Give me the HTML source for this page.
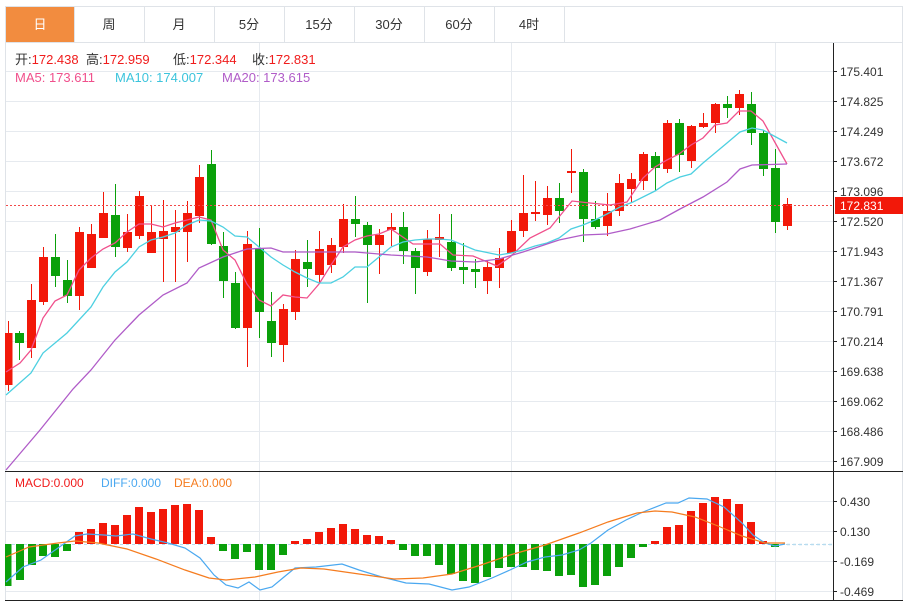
<!DOCTYPE html>
<html><head><meta charset="utf-8"><style>
html,body{margin:0;padding:0;background:#fff;width:909px;height:602px;overflow:hidden}
svg{display:block;font-family:"Liberation Sans","Noto Sans CJK SC",sans-serif}
</style></head><body>
<svg width="909" height="602" viewBox="0 0 909 602" xmlns="http://www.w3.org/2000/svg">
<rect x="5.5" y="6.5" width="897" height="36" fill="#fff" stroke="#dfe3e8"/>
<rect x="6" y="7" width="68" height="35" fill="#f28c3f"/>
<g stroke="#dfe3e8"><line x1="74.5" y1="6" x2="74.5" y2="42"/><line x1="144.5" y1="6" x2="144.5" y2="42"/><line x1="214.5" y1="6" x2="214.5" y2="42"/><line x1="284.5" y1="6" x2="284.5" y2="42"/><line x1="354.5" y1="6" x2="354.5" y2="42"/><line x1="424.5" y1="6" x2="424.5" y2="42"/><line x1="494.5" y1="6" x2="494.5" y2="42"/><line x1="564.5" y1="6" x2="564.5" y2="42"/></g>
<g font-size="13" text-anchor="middle" fill="#333"><text x="40" y="29" fill="#fff">日</text><text x="109" y="29">周</text><text x="179" y="29">月</text><text x="249" y="29">5分</text><text x="319" y="29">15分</text><text x="389" y="29">30分</text><text x="459" y="29">60分</text><text x="529" y="29">4时</text></g>
<line x1="5.5" y1="42" x2="5.5" y2="601" stroke="#dfe3e8"/>
<line x1="902.5" y1="42" x2="902.5" y2="601" stroke="#dfe3e8"/>
<g stroke="#e6eaef">
<line x1="6" y1="71.5" x2="833" y2="71.5"/><line x1="6" y1="101.5" x2="833" y2="101.5"/><line x1="6" y1="131.5" x2="833" y2="131.5"/><line x1="6" y1="161.5" x2="833" y2="161.5"/><line x1="6" y1="191.5" x2="833" y2="191.5"/><line x1="6" y1="221.5" x2="833" y2="221.5"/><line x1="6" y1="251.5" x2="833" y2="251.5"/><line x1="6" y1="281.5" x2="833" y2="281.5"/><line x1="6" y1="311.5" x2="833" y2="311.5"/><line x1="6" y1="341.5" x2="833" y2="341.5"/><line x1="6" y1="371.5" x2="833" y2="371.5"/><line x1="6" y1="401.5" x2="833" y2="401.5"/><line x1="6" y1="431.5" x2="833" y2="431.5"/><line x1="6" y1="461.5" x2="833" y2="461.5"/>
<line x1="6" y1="501.5" x2="833" y2="501.5"/><line x1="6" y1="531.5" x2="833" y2="531.5"/><line x1="6" y1="561.5" x2="833" y2="561.5"/><line x1="6" y1="591.5" x2="833" y2="591.5"/>
<line x1="259.5" y1="43" x2="259.5" y2="600"/><line x1="511.5" y1="43" x2="511.5" y2="600"/><line x1="775.5" y1="43" x2="775.5" y2="600"/>
</g>
<g font-size="13">
<text x="15" y="64" fill="#333">开:<tspan fill="#f01c1c">172.438</tspan></text>
<text x="86" y="64" fill="#333">高:<tspan fill="#f01c1c">172.959</tspan></text>
<text x="173" y="64" fill="#333">低:<tspan fill="#f01c1c">172.344</tspan></text>
<text x="252" y="64" fill="#333">收:<tspan fill="#f01c1c">172.831</tspan></text>
<text x="15" y="82" fill="#f0508c">MA5: 173.611</text><text x="115" y="82" fill="#3cc4dc">MA10: 174.007</text><text x="222" y="82" fill="#b05cc8">MA20: 173.615</text>
</g>
<g fill="#f21809" stroke="#f21809">
<line x1="8.5" y1="321" x2="8.5" y2="391"/><rect x="5" y="333" width="7.5" height="52" stroke="none"/>
<line x1="31.5" y1="284" x2="31.5" y2="358"/><rect x="27" y="300" width="9" height="48" stroke="none"/>
<line x1="43.5" y1="247" x2="43.5" y2="305"/><rect x="39" y="257" width="9" height="45" stroke="none"/>
<line x1="79.5" y1="227" x2="79.5" y2="310"/><rect x="75" y="232" width="9" height="64" stroke="none"/>
<line x1="91.5" y1="224" x2="91.5" y2="268"/><rect x="87" y="234" width="9" height="34" stroke="none"/>
<line x1="103.5" y1="192" x2="103.5" y2="238"/><rect x="99" y="213" width="9" height="25" stroke="none"/>
<line x1="127.5" y1="214" x2="127.5" y2="252"/><rect x="123" y="232" width="9" height="16" stroke="none"/>
<line x1="139.5" y1="191" x2="139.5" y2="239"/><rect x="135" y="196" width="9" height="40" stroke="none"/>
<line x1="151.5" y1="206" x2="151.5" y2="253"/><rect x="147" y="232" width="9" height="21" stroke="none"/>
<line x1="163.5" y1="200" x2="163.5" y2="282"/><rect x="159" y="231" width="9" height="8" stroke="none"/>
<line x1="175.5" y1="210" x2="175.5" y2="282"/><rect x="171" y="227" width="9" height="5" stroke="none"/>
<line x1="187.5" y1="201" x2="187.5" y2="262"/><rect x="183" y="213" width="9" height="19" stroke="none"/>
<line x1="199.5" y1="165" x2="199.5" y2="223"/><rect x="195" y="177" width="9" height="39" stroke="none"/>
<line x1="247.5" y1="231" x2="247.5" y2="367"/><rect x="243" y="244" width="9" height="84" stroke="none"/>
<line x1="283.5" y1="304" x2="283.5" y2="362"/><rect x="279" y="309" width="9" height="36" stroke="none"/>
<line x1="295.5" y1="250" x2="295.5" y2="320"/><rect x="291" y="259" width="9" height="53" stroke="none"/>
<line x1="319.5" y1="231" x2="319.5" y2="284"/><rect x="315" y="249" width="9" height="26" stroke="none"/>
<line x1="331.5" y1="238" x2="331.5" y2="273"/><rect x="327" y="245" width="9" height="20" stroke="none"/>
<line x1="343.5" y1="204" x2="343.5" y2="253"/><rect x="339" y="219" width="9" height="28" stroke="none"/>
<line x1="379.5" y1="229" x2="379.5" y2="274"/><rect x="375" y="235" width="9" height="10" stroke="none"/>
<line x1="391.5" y1="213" x2="391.5" y2="246"/><rect x="387" y="227" width="9" height="3" stroke="none"/>
<line x1="427.5" y1="230" x2="427.5" y2="276"/><rect x="423" y="239" width="9" height="33" stroke="none"/>
<line x1="439.5" y1="214" x2="439.5" y2="257"/><rect x="435" y="237" width="9" height="3" stroke="none"/>
<line x1="487.5" y1="260" x2="487.5" y2="294"/><rect x="483" y="267" width="9" height="14" stroke="none"/>
<line x1="499.5" y1="248" x2="499.5" y2="288"/><rect x="495" y="258" width="9" height="10" stroke="none"/>
<line x1="511.5" y1="220" x2="511.5" y2="253"/><rect x="507" y="231" width="9" height="22" stroke="none"/>
<line x1="523.5" y1="175" x2="523.5" y2="237"/><rect x="519" y="213" width="9" height="18" stroke="none"/>
<line x1="535.5" y1="181" x2="535.5" y2="221"/><rect x="531" y="212" width="9" height="2" stroke="none"/>
<line x1="547.5" y1="186" x2="547.5" y2="225"/><rect x="543" y="198" width="9" height="17" stroke="none"/>
<line x1="571.5" y1="149" x2="571.5" y2="193"/><rect x="567" y="171" width="9" height="2" stroke="none"/>
<line x1="607.5" y1="193" x2="607.5" y2="236"/><rect x="603" y="211" width="9" height="15" stroke="none"/>
<line x1="619.5" y1="174" x2="619.5" y2="216"/><rect x="615" y="183" width="9" height="28" stroke="none"/>
<line x1="631.5" y1="173" x2="631.5" y2="202"/><rect x="627" y="179" width="9" height="10" stroke="none"/>
<line x1="643.5" y1="152" x2="643.5" y2="190"/><rect x="639" y="154" width="9" height="27" stroke="none"/>
<line x1="667.5" y1="120" x2="667.5" y2="173"/><rect x="663" y="123" width="9" height="46" stroke="none"/>
<line x1="691.5" y1="125" x2="691.5" y2="168"/><rect x="687" y="126" width="9" height="35" stroke="none"/>
<line x1="703.5" y1="113" x2="703.5" y2="128"/><rect x="699" y="123" width="9" height="4" stroke="none"/>
<line x1="715.5" y1="103" x2="715.5" y2="133"/><rect x="711" y="104" width="9" height="19" stroke="none"/>
<line x1="739.5" y1="90" x2="739.5" y2="115"/><rect x="735" y="94" width="9" height="14" stroke="none"/>
<line x1="787.5" y1="198" x2="787.5" y2="230"/><rect x="783" y="204" width="9" height="22" stroke="none"/>
</g>
<g fill="#0aa00a" stroke="#0aa00a">
<line x1="19.5" y1="331" x2="19.5" y2="360"/><rect x="15" y="333" width="9" height="10" stroke="none"/>
<line x1="55.5" y1="234" x2="55.5" y2="287"/><rect x="51" y="257" width="9" height="19" stroke="none"/>
<line x1="67.5" y1="260" x2="67.5" y2="303"/><rect x="63" y="280" width="9" height="16" stroke="none"/>
<line x1="115.5" y1="184" x2="115.5" y2="257"/><rect x="111" y="215" width="9" height="32" stroke="none"/>
<line x1="211.5" y1="150" x2="211.5" y2="245"/><rect x="207" y="164" width="9" height="80" stroke="none"/>
<line x1="223.5" y1="232" x2="223.5" y2="298"/><rect x="219" y="246" width="9" height="35" stroke="none"/>
<line x1="235.5" y1="272" x2="235.5" y2="329"/><rect x="231" y="283" width="9" height="45" stroke="none"/>
<line x1="259.5" y1="228" x2="259.5" y2="338"/><rect x="255" y="248" width="9" height="64" stroke="none"/>
<line x1="271.5" y1="292" x2="271.5" y2="357"/><rect x="267" y="321" width="9" height="22" stroke="none"/>
<line x1="307.5" y1="240" x2="307.5" y2="287"/><rect x="303" y="262" width="9" height="7" stroke="none"/>
<line x1="355.5" y1="196" x2="355.5" y2="237"/><rect x="351" y="219" width="9" height="5" stroke="none"/>
<line x1="367.5" y1="222" x2="367.5" y2="303"/><rect x="363" y="225" width="9" height="20" stroke="none"/>
<line x1="403.5" y1="212" x2="403.5" y2="264"/><rect x="399" y="227" width="9" height="24" stroke="none"/>
<line x1="415.5" y1="248" x2="415.5" y2="294"/><rect x="411" y="251" width="9" height="17" stroke="none"/>
<line x1="451.5" y1="214" x2="451.5" y2="271"/><rect x="447" y="242" width="9" height="26" stroke="none"/>
<line x1="463.5" y1="243" x2="463.5" y2="284"/><rect x="459" y="267" width="9" height="3" stroke="none"/>
<line x1="475.5" y1="259" x2="475.5" y2="288"/><rect x="471" y="269" width="9" height="3" stroke="none"/>
<line x1="559.5" y1="183" x2="559.5" y2="223"/><rect x="555" y="198" width="9" height="13" stroke="none"/>
<line x1="583.5" y1="169" x2="583.5" y2="242"/><rect x="579" y="172" width="9" height="47" stroke="none"/>
<line x1="595.5" y1="201" x2="595.5" y2="229"/><rect x="591" y="219" width="9" height="8" stroke="none"/>
<line x1="655.5" y1="152" x2="655.5" y2="191"/><rect x="651" y="156" width="9" height="12" stroke="none"/>
<line x1="679.5" y1="119" x2="679.5" y2="172"/><rect x="675" y="123" width="9" height="32" stroke="none"/>
<line x1="727.5" y1="96" x2="727.5" y2="118"/><rect x="723" y="104" width="9" height="4" stroke="none"/>
<line x1="751.5" y1="92" x2="751.5" y2="145"/><rect x="747" y="104" width="9" height="29" stroke="none"/>
<line x1="763.5" y1="130" x2="763.5" y2="176"/><rect x="759" y="133" width="9" height="36" stroke="none"/>
<line x1="775.5" y1="149" x2="775.5" y2="233"/><rect x="771" y="168" width="9" height="54" stroke="none"/>
</g>
<g fill="none" stroke-width="1.3">
<polyline stroke="#f0508c" points="6,372 20,363 31,350 43,318 55,301 67,295 79,270 91,258 103,249 115,243 127,232 139,224 151,224 163,227 175,223 187,220 199,217 211,220 223,250 235,260 247,284 259,300 271,306 283,295 295,297 307,298 319,284 331,265 343,247 355,240 367,236 379,234 391,229 413,244 440,244 453,255 473,256 497,266 510,257 530,238 550,228 572,201 590,203 610,205 627,202 643,178 655,167 667,160 679,154 691,145 703,138 715,125 727,123 739,111 751,111 763,121 787,164"/>
<polyline stroke="#4dd0e1" points="6,395 31,373 43,353 67,333 91,307 103,287 115,272 127,262 139,247 151,240 163,237 175,233 187,225 199,220 211,221 223,227 235,236 247,237 259,247 271,257 283,265 295,272 307,278 319,283 331,283 343,277 355,267 367,267 379,257 391,247 403,242 415,240 427,239 439,239 451,240 463,245 475,250 499,255 511,253 523,250 535,246 547,243 559,238 571,229 583,225 595,220 607,214 620,207 633,202 655,191 667,183 680,177 691,174 703,163 715,153 727,143 740,132 752,128 763,130 787,143"/>
<polyline stroke="#b05cc8" points="6,470 40,430 73,389 91,370 115,340 139,315 163,295 187,283 199,268 223,257 247,249 271,248 283,252 295,252 330,252 355,252 391,255 427,257 451,261 475,262 499,259 523,252 559,240 583,235 607,234 630,229 660,220 680,209 703,197 727,182 740,169 752,165 787,164"/>
</g>
<line x1="6" y1="205.5" x2="833" y2="205.5" stroke="#f24848" stroke-dasharray="2,2"/>
<line x1="5" y1="471.5" x2="903" y2="471.5" stroke="#222"/>
<line x1="5" y1="600.5" x2="903" y2="600.5" stroke="#222"/>
<line x1="833.5" y1="43" x2="833.5" y2="600" stroke="#222"/>
<g stroke="#222"><line x1="833" y1="71.5" x2="837" y2="71.5"/><line x1="833" y1="101.5" x2="837" y2="101.5"/><line x1="833" y1="131.5" x2="837" y2="131.5"/><line x1="833" y1="161.5" x2="837" y2="161.5"/><line x1="833" y1="191.5" x2="837" y2="191.5"/><line x1="833" y1="221.5" x2="837" y2="221.5"/><line x1="833" y1="251.5" x2="837" y2="251.5"/><line x1="833" y1="281.5" x2="837" y2="281.5"/><line x1="833" y1="311.5" x2="837" y2="311.5"/><line x1="833" y1="341.5" x2="837" y2="341.5"/><line x1="833" y1="371.5" x2="837" y2="371.5"/><line x1="833" y1="401.5" x2="837" y2="401.5"/><line x1="833" y1="431.5" x2="837" y2="431.5"/><line x1="833" y1="461.5" x2="837" y2="461.5"/><line x1="833" y1="501.5" x2="837" y2="501.5"/><line x1="833" y1="531.5" x2="837" y2="531.5"/><line x1="833" y1="561.5" x2="837" y2="561.5"/><line x1="833" y1="591.5" x2="837" y2="591.5"/></g>
<g font-size="12" fill="#333">
<text x="840" y="76">175.401</text><text x="840" y="106">174.825</text><text x="840" y="136">174.249</text><text x="840" y="166">173.672</text><text x="840" y="196">173.096</text><text x="840" y="226">172.520</text><text x="840" y="256">171.943</text><text x="840" y="286">171.367</text><text x="840" y="316">170.791</text><text x="840" y="346">170.214</text><text x="840" y="376">169.638</text><text x="840" y="406">169.062</text><text x="840" y="436">168.486</text><text x="840" y="466">167.909</text>
<text x="840" y="506">0.430</text><text x="840" y="536">0.130</text><text x="840" y="566">-0.169</text><text x="840" y="596">-0.469</text>
</g>
<rect x="835" y="197" width="68" height="17" fill="#f21809"/>
<text x="840" y="210" font-size="12" fill="#fff">172.831</text>
<g font-size="12"><text x="15" y="487" fill="#f01c1c">MACD:0.000</text><text x="101" y="487" fill="#4aa8f0">DIFF:0.000</text><text x="174" y="487" fill="#f57c1f">DEA:0.000</text></g>
<line x1="6" y1="544.5" x2="833" y2="544.5" stroke="#b8dcef" stroke-dasharray="3,3"/>
<g fill="#0aa00a">
<rect x="5" y="544" width="6.5" height="42"/><rect x="16" y="544" width="8" height="36"/><rect x="28" y="544" width="8" height="21"/><rect x="39" y="544" width="8" height="12"/><rect x="51" y="544" width="8" height="13"/><rect x="63" y="544" width="8" height="7"/>
<rect x="219" y="544" width="8" height="7"/><rect x="231" y="544" width="8" height="15"/><rect x="243" y="544" width="8" height="8"/><rect x="255" y="544" width="8" height="26"/><rect x="267" y="544" width="8" height="26"/><rect x="279" y="544" width="8" height="11"/>
<rect x="399" y="544" width="8" height="6"/><rect x="411" y="544" width="8" height="12"/><rect x="423" y="544" width="8" height="12"/><rect x="435" y="544" width="8" height="21"/><rect x="447" y="544" width="8" height="30"/><rect x="459" y="544" width="8" height="37"/><rect x="471" y="544" width="8" height="39"/><rect x="483" y="544" width="8" height="33"/><rect x="495" y="544" width="8" height="24"/><rect x="507" y="544" width="8" height="23"/><rect x="519" y="544" width="8" height="23"/><rect x="531" y="544" width="8" height="26"/><rect x="543" y="544" width="8" height="27"/><rect x="555" y="544" width="8" height="32"/><rect x="567" y="544" width="8" height="31"/><rect x="579" y="544" width="8" height="43"/><rect x="591" y="544" width="8" height="41"/><rect x="603" y="544" width="8" height="32"/><rect x="615" y="544" width="8" height="23"/><rect x="627" y="544" width="8" height="14"/><rect x="639" y="544" width="8" height="3"/>
<rect x="771" y="544" width="8" height="3"/>
</g>
<g fill="#f21809">
<rect x="75" y="532" width="8" height="12"/><rect x="87" y="529" width="8" height="15"/><rect x="99" y="523" width="8" height="21"/><rect x="111" y="525" width="8" height="19"/><rect x="123" y="515" width="8" height="29"/><rect x="135" y="507" width="8" height="37"/><rect x="147" y="512" width="8" height="32"/><rect x="159" y="509" width="8" height="35"/><rect x="171" y="505" width="8" height="39"/><rect x="183" y="504" width="8" height="40"/><rect x="195" y="510" width="8" height="34"/><rect x="207" y="537" width="8" height="7"/>
<rect x="291" y="541" width="8" height="3"/><rect x="303" y="539" width="8" height="5"/><rect x="315" y="532" width="8" height="12"/><rect x="327" y="528" width="8" height="16"/><rect x="339" y="524" width="8" height="20"/><rect x="351" y="529" width="8" height="15"/><rect x="363" y="535" width="8" height="9"/><rect x="375" y="536" width="8" height="8"/><rect x="387" y="540" width="8" height="4"/>
<rect x="651" y="541" width="8" height="3"/><rect x="663" y="527" width="8" height="17"/><rect x="675" y="525" width="8" height="19"/><rect x="687" y="511" width="8" height="33"/><rect x="699" y="503" width="8" height="41"/><rect x="711" y="497" width="8" height="47"/><rect x="723" y="499" width="8" height="45"/><rect x="735" y="504" width="8" height="40"/><rect x="747" y="522" width="8" height="22"/><rect x="759" y="541" width="8" height="3"/>
</g>
<g fill="none" stroke-width="1.2">
<polyline stroke="#4aa8f0" points="6,582 23,567 41,560 58,548 75,536 87,534 104,535 116,536 133,534 151,539 168,543 185,548 200,558 214,575 226,585 238,588 249,582 260,590 272,587 284,577 295,568 316,567 342,564 359,570 382,577 406,583 429,584 452,590 469,587 492,578 510,570 527,562 545,557 562,555 579,550 591,543 608,530 626,520 643,512 666,503 678,503 689,498 707,499 724,507 742,523 753,535 765,543 775,546 785,544"/>
<polyline stroke="#f57c1f" points="6,557 29,547 58,543 75,541 98,543 127,549 156,559 185,570 209,578 226,580 255,577 278,572 301,568 324,569 359,574 394,579 423,578 452,574 481,565 510,555 545,545 579,533 608,522 637,513 655,511 672,512 695,517 718,526 742,536 765,543 785,543"/>
</g>
<line x1="787" y1="544.5" x2="833" y2="544.5" stroke="#b8dcef" stroke-width="1.5" stroke-dasharray="3,3"/>
</svg>
</body></html>
